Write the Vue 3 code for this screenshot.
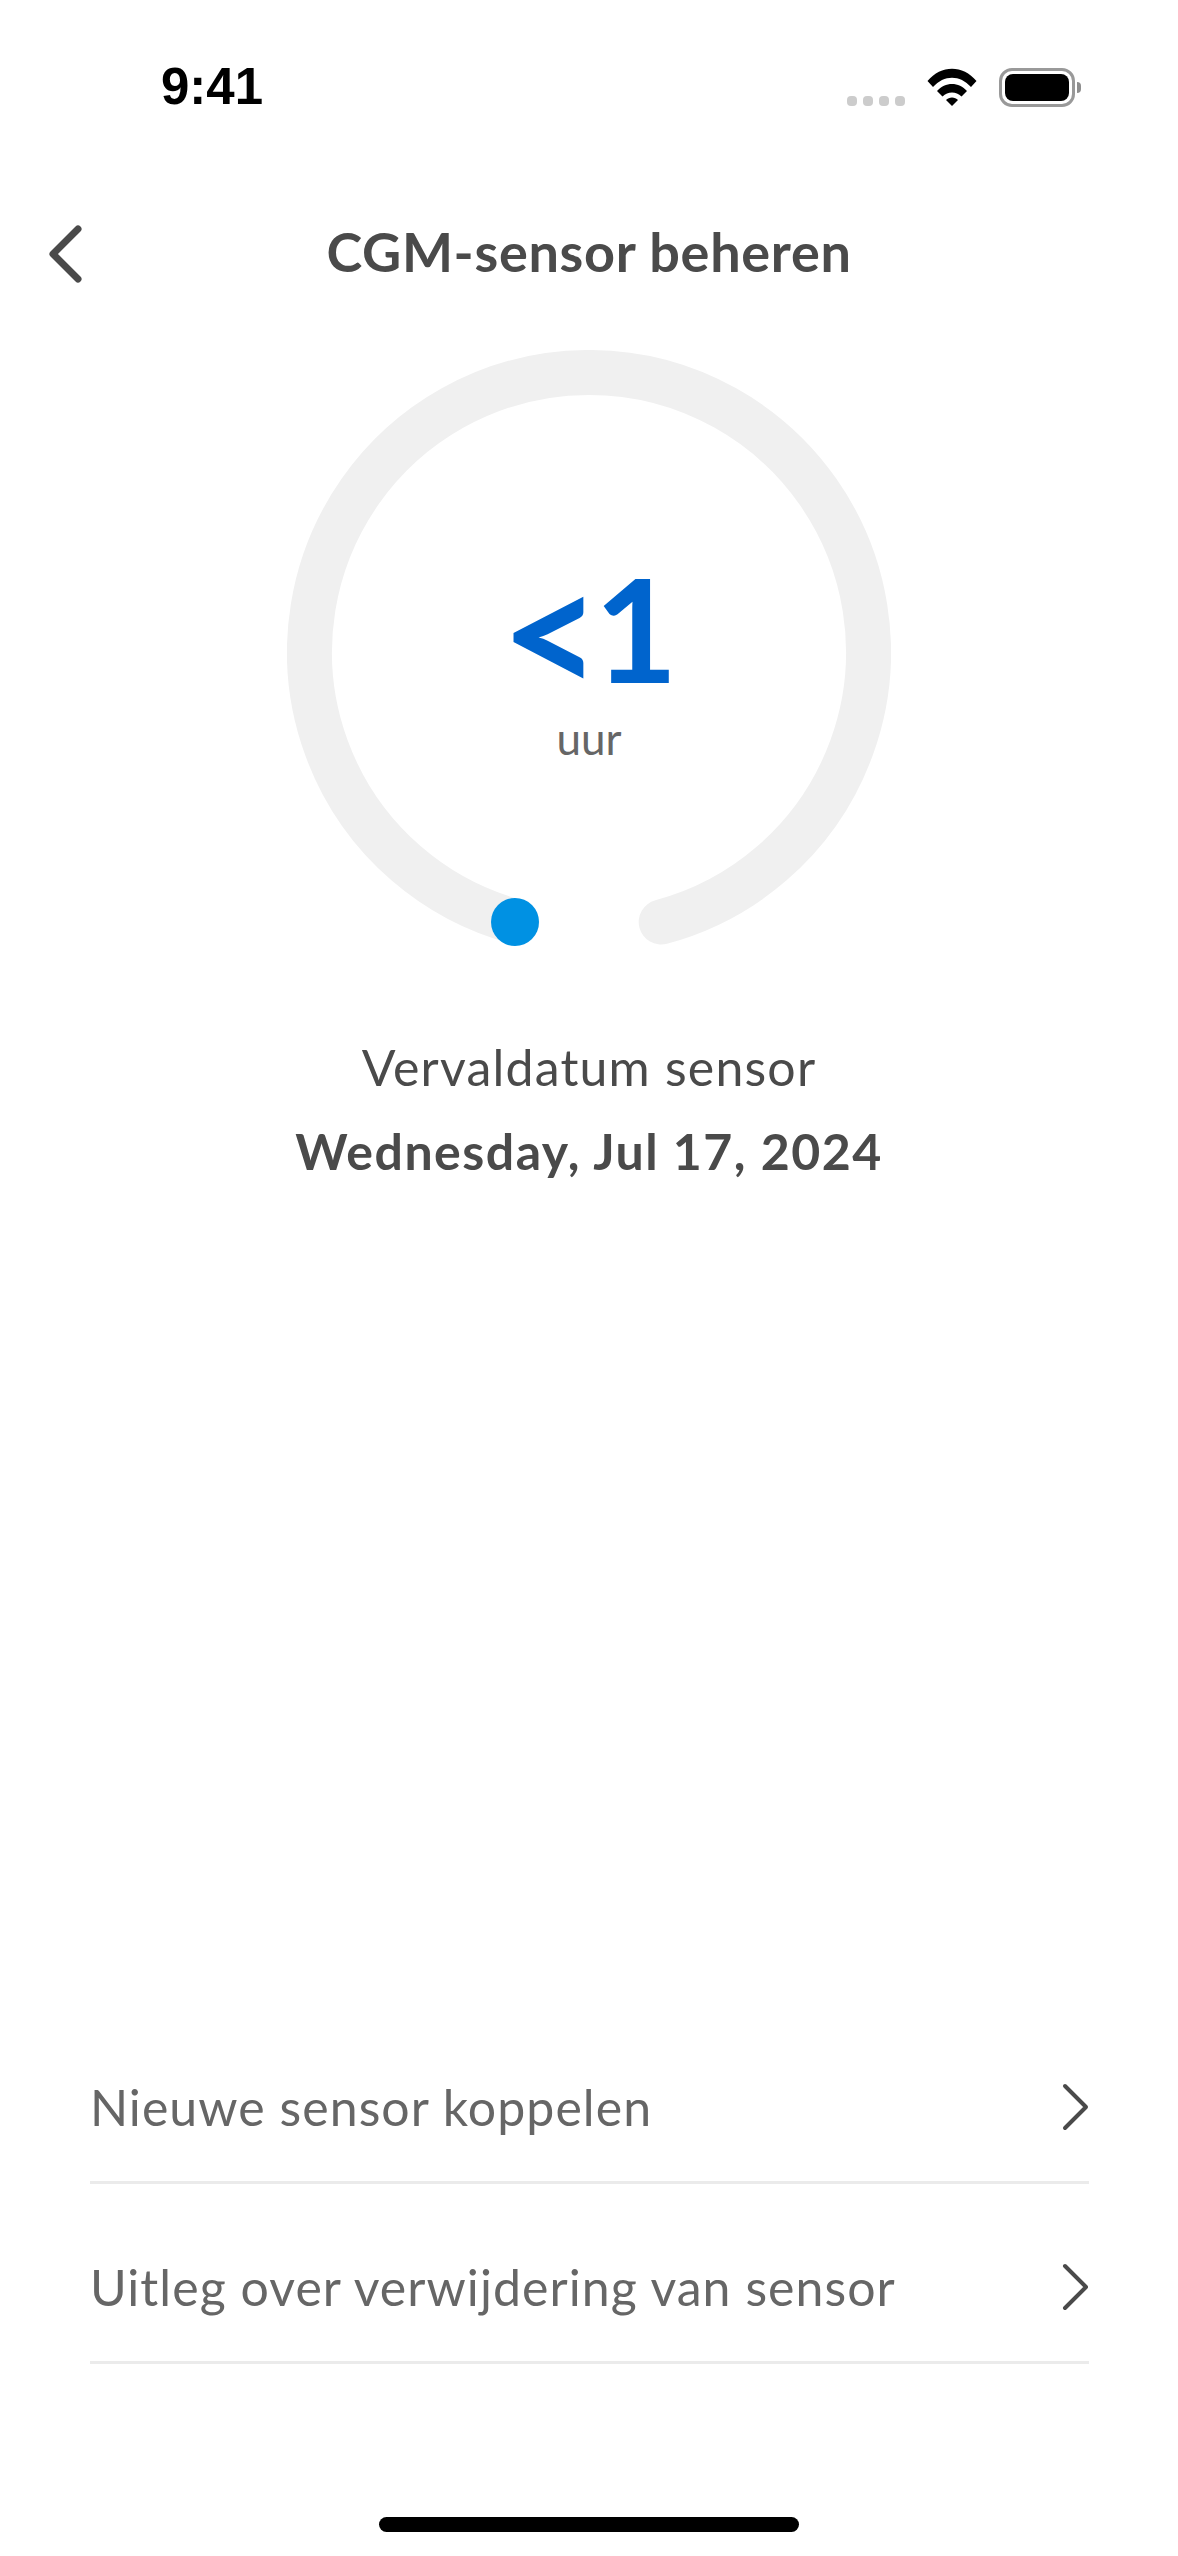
<script setup>
const menuItems = ['Nieuwe sensor koppelen', 'Uitleg over verwijdering van sensor']
const signalDots = [0, 1, 2, 3]
</script>

<template>
  <div class="screen">
    <div class="statusBar">
      <span class="time">9:41</span>
      <div class="statusIcons">
        <div class="signal">
          <span v-for="dot in signalDots" :key="dot" class="signalDot"></span>
        </div>
        <svg class="wifi" width="50" height="38" viewBox="0 0 50 38">
          <path d="M0.5 13 C14 -3.5 36 -3.5 49.5 13 L44 19 C33 6.5 17 6.5 6 19 Z" fill="#000" />
          <path d="M10 23 C18 13.5 32 13.5 40 23 L34.5 28.5 C29 23 21 23 15.5 28.5 Z" fill="#000" />
          <path d="M19 32 C22 28.5 28 28.5 31 32 L25 38 Z" fill="#000" />
        </svg>
        <div class="battery">
          <div class="batteryBody"><div class="batteryFill"></div></div>
          <div class="batteryNub"></div>
        </div>
      </div>
    </div>

    <div class="navBar">
      <svg class="backIcon" width="34" height="58" viewBox="0 0 34 58">
        <path d="M30 4 L5 29 L30 54" fill="none" stroke="#4a4a4a" stroke-width="7" stroke-linecap="round" stroke-linejoin="round" />
      </svg>
      <h1 class="title">CGM-sensor beheren</h1>
    </div>

    <div class="gauge">
      <svg width="604" height="604" viewBox="0 0 604 604">
        <path
          d="M 374.2 572 A 279.5 279.5 0 1 0 229.8 572"
          fill="none"
          stroke="#f0f0f0"
          stroke-width="45"
          stroke-linecap="round"
        />
        <circle cx="228" cy="572" r="24" fill="#0091e3" />
      </svg>
      <div class="gaugeCenter">
        <div class="gaugeValue"><span class="gaugeLess">&lt;</span>1</div>
        <div class="gaugeUnit">uur</div>
      </div>
    </div>

    <div class="expiry">
      <div class="expiryLabel">Vervaldatum sensor</div>
      <div class="expiryDate">Wednesday, Jul 17, 2024</div>
    </div>

    <div class="menu">
      <div v-for="item in menuItems" :key="item" class="menuRow">
        <span class="menuText">{{ item }}</span>
        <svg class="chevron" width="28" height="48" viewBox="0 0 28 48">
          <path d="M4 3 L25 24 L4 45" fill="none" stroke="#4a4a4a" stroke-width="4" stroke-linecap="round" stroke-linejoin="round" />
        </svg>
      </div>
    </div>

    <div class="homeIndicator"></div>
  </div>
</template>

<style scoped>
.screen {
  width: 1178px;
  height: 2556px;
  background: #fff;
  display: flex;
  flex-direction: column;
  font-family: "Lato", "Noto Sans", sans-serif;
  box-sizing: border-box;
  overflow: hidden;
}
.statusBar {
  height: 68px;
  margin-top: 54px;
  display: flex;
  justify-content: space-between;
  align-items: flex-start;
  padding: 0 97px 0 161px;
  flex-shrink: 0;
}
.time {
  font-family: "Liberation Sans", sans-serif;
  font-weight: 700;
  font-size: 51px;
  line-height: 66px;
  color: #000;
}
.statusIcons {
  display: flex;
  align-items: flex-start;
  margin-top: 14px;
}
.signal {
  display: flex;
  gap: 6px;
  margin-top: 28px;
  margin-right: 22px;
}
.signalDot {
  width: 10px;
  height: 10px;
  border-radius: 4px;
  background: #ccc;
}
.wifi {
  margin-right: 22px;
}
.battery {
  display: flex;
  align-items: center;
  gap: 2px;
}
.batteryBody {
  width: 76px;
  height: 39px;
  box-sizing: border-box;
  border: 3px solid #999;
  border-radius: 13px;
  padding: 3px;
}
.batteryFill {
  width: 100%;
  height: 100%;
  background: #000;
  border-radius: 8px;
}
.batteryNub {
  width: 4px;
  height: 11px;
  background: #8e8e8e;
  border-radius: 0 4px 4px 0;
}
.navBar {
  position: relative;
  height: 100px;
  margin-top: 82px;
  display: flex;
  align-items: center;
  justify-content: center;
  flex-shrink: 0;
}
.backIcon {
  position: absolute;
  left: 48px;
  top: 21px;
}
.title {
  margin: 0 0 6px;
  font-size: 54px;
  letter-spacing: 0.7px;
  font-weight: 700;
  color: #4a4a4a;
}
.gauge {
  position: relative;
  width: 604px;
  height: 604px;
  margin: 46px auto 0;
  flex-shrink: 0;
}
.gauge svg {
  display: block;
}
.gaugeCenter {
  position: absolute;
  left: 0;
  right: 0;
  top: 196px;
  text-align: center;
}
.gaugeValue {
  font-size: 144px;
  line-height: 164px;
  font-weight: 700;
  color: #0064cd;
}
.gaugeLess {
  font-size: 176px;
  line-height: 100px;
  margin-right: -8px;
  vertical-align: -14px;
}
.gaugeUnit {
  font-size: 44px;
  line-height: 56px;
  color: #666;
}
.expiry {
  margin-top: 71px;
  text-align: center;
  flex-shrink: 0;
}
.expiryLabel {
  font-size: 50px;
  letter-spacing: 1.2px;
  line-height: 84px;
  color: #4a4a4a;
}
.expiryDate {
  font-size: 50px;
  letter-spacing: 1.5px;
  line-height: 84px;
  font-weight: 700;
  color: #4a4a4a;
}
.menu {
  margin: auto 89px 0 90px;
}
.menuRow {
  height: 180px;
  box-sizing: border-box;
  padding-top: 28px;
  border-bottom: 3px solid #ebebeb;
  display: flex;
  align-items: center;
  justify-content: space-between;
}
.menuText {
  font-size: 50px;
  letter-spacing: 1.05px;
  color: #666;
}
.homeIndicator {
  width: 420px;
  height: 15px;
  border-radius: 8px;
  background: #000;
  margin: 153px auto 24px;
  flex-shrink: 0;
}
</style>

<style>
html, body {
  margin: 0;
  background: #fff;
}
</style>
